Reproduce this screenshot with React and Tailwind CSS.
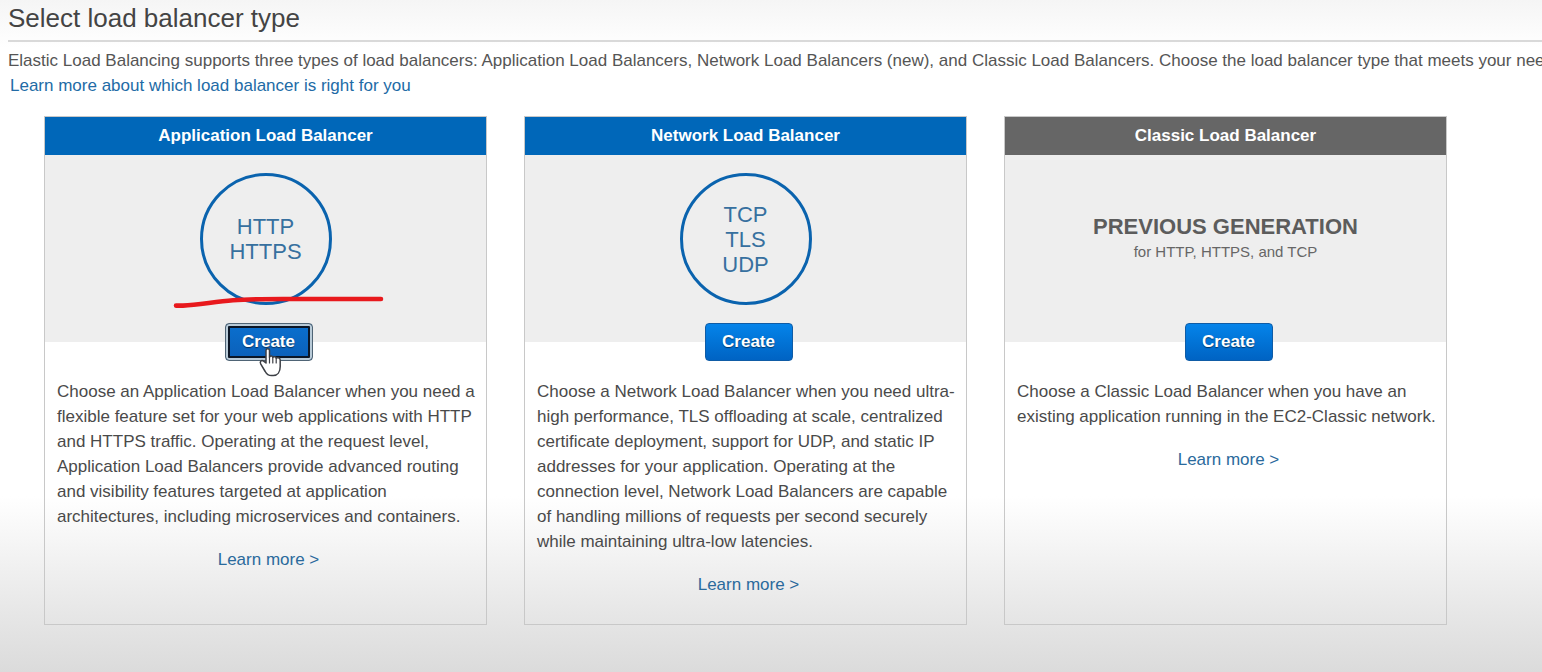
const cards = [
  {
    title: "Application Load Balancer",
    protocols: ["HTTP", "HTTPS"],
    text: "Choose an Application Load Balancer when you need a flexible feature set for your web applications with HTTP and HTTPS traffic. Operating at the request level, Application Load Balancers provide advanced routing and visibility features targeted at application architectures, including microservices and containers.",
    active: true,
  },
  {
    title: "Network Load Balancer",
    protocols: ["TCP", "TLS", "UDP"],
    text: "Choose a Network Load Balancer when you need ultra-high performance, TLS offloading at scale, centralized certificate deployment, support for UDP, and static IP addresses for your application. Operating at the connection level, Network Load Balancers are capable of handling millions of requests per second securely while maintaining ultra-low latencies.",
  },
  {
    title: "Classic Load Balancer",
    text: "Choose a Classic Load Balancer when you have an existing application running in the EC2-Classic network.",
    previous: true,
  },
];

function Underline() {
  return (
    <svg
      className="absolute top-[138px] left-[128px] h-4 w-[212px]"
      viewBox="0 0 212 16"
      fill="none"
      aria-hidden="true"
    >
      <path
        d="M3 12.600H10C26 12 42 8.500 60 7.300C76 6 90 6 110 6H208"
        stroke="#e8191d"
        strokeWidth="4.600"
        strokeLinecap="round"
        strokeLinejoin="round"
      />
    </svg>
  );
}

function HandPointer() {
  return (
    <svg
      className="pointer-events-none absolute top-6 left-[33px] h-[30px] w-[26px]"
      viewBox="0 0 26 30"
      aria-hidden="true"
    >
      <path
        d="M8 16V3.500C8 1.200 11.500 1.200 11.500 3.500V10.200C12 8.500 14.800 8.700 14.800 10.600C15.300 9.200 18.200 9.400 18.200 11.300C18.800 10.200 22 10.500 22.200 13V19.500C22.200 25 19.500 28.600 15.300 28.600H13.500C10.500 28.600 8.500 27 7.200 24.500L2.800 17.200C1.300 14.500 3.600 12.500 5.600 14.200Z"
        fill="#fff"
        stroke="#3c3f45"
        strokeWidth="1.500"
        strokeLinejoin="round"
      />
      <path
        d="M11.500 10.200V16M14.800 10.600V16M18.200 11.300V16"
        stroke="#3c3f45"
        strokeWidth="1.200"
        strokeLinecap="round"
      />
    </svg>
  );
}

function Card({ title, protocols, text, active, previous }) {
  return (
    <section className="flex flex-col border border-[#c8c8c8]">
      <h2
        className={`py-[7px] text-center text-[17px] leading-6 font-bold text-white ${
          previous ? "bg-[#666666]" : "bg-[#0067b9]"
        }`}
      >
        {title}
      </h2>
      <div className="relative flex h-[187px] flex-col items-center bg-[#eeeeee] pt-[18px]">
        {previous ? (
          <div className="flex h-[132px] flex-col justify-center text-center text-[#666666]">
            <p className="text-[22px] leading-[25px] font-bold text-[#5c5c5c]">PREVIOUS GENERATION</p>
            <p className="text-[15px] leading-[25px]">for HTTP, HTTPS, and TCP</p>
          </div>
        ) : (
          <div className="flex size-[132px] flex-col items-center justify-center rounded-full border-3 border-[#0a63ae] text-[22px] leading-[25px] text-[#37709f]">
            {protocols.map((p) => (
              <span key={p}>{p}</span>
            ))}
          </div>
        )}
        {active && <Underline />}
      </div>
      <div className="flex flex-col items-center pr-1.5 pb-[27px] pl-3">
        <div className="relative -mt-[19px]">
          <button
            type="button"
            className={`h-[38px] w-[88px] rounded border text-[17px] font-bold text-white [text-shadow:0_1px_1px_rgba(0,0,0,0.5)] ${
              active
                ? "border-[#4f6475] bg-linear-to-b from-[#0a70cf] to-[#0b5fb8] shadow-[inset_0_0_0_2px_#b9cbd8,inset_0_0_0_4px_#0b1626]"
                : "border-[#0f5ca6] bg-linear-to-b from-[#0584ea] to-[#0063c3]"
            }`}
          >
            Create
          </button>
          {active && <HandPointer />}
        </div>
        <p className="mt-[18px] w-full text-[17px] leading-[25px] text-[#4a4a4a]">{text}</p>
        <a href="#" className="mt-[18px] text-[17px] leading-[25px] text-[#2a6a9c]">
          Learn more &gt;
        </a>
      </div>
    </section>
  );
}

export default function App() {
  return (
    <main className="flex min-h-screen flex-col overflow-hidden bg-white bg-[linear-gradient(to_bottom,#f5f5f5_0,#ffffff_48px,#ffffff_calc(100%_-_176px),#e9e9e9_calc(100%_-_70px),#dbdbdb_100%)] pl-2 font-['Liberation_Sans',Arial,sans-serif]">
      <h1 className="border-b-2 border-[#d9d9d9] pt-1 pb-2 text-[26px] leading-7 text-[#444444]">
        Select load balancer type
      </h1>
      <p className="mt-[6px] text-[17px] leading-[25px] whitespace-nowrap text-[#555555]">
        Elastic Load Balancing supports three types of load balancers: Application Load Balancers, Network Load
        Balancers (new), and Classic Load Balancers. Choose the load balancer type that meets your needs
      </p>
      <a href="#" className="ml-[2px] self-start text-[17px] leading-[25px] text-[#226ba6]">
        Learn more about which load balancer is right for you
      </a>
      <div className="mt-[18px] mr-[95px] ml-9 grid grid-cols-3 gap-[37px]">
        {cards.map((c) => (
          <Card key={c.title} {...c} />
        ))}
      </div>
    </main>
  );
}
